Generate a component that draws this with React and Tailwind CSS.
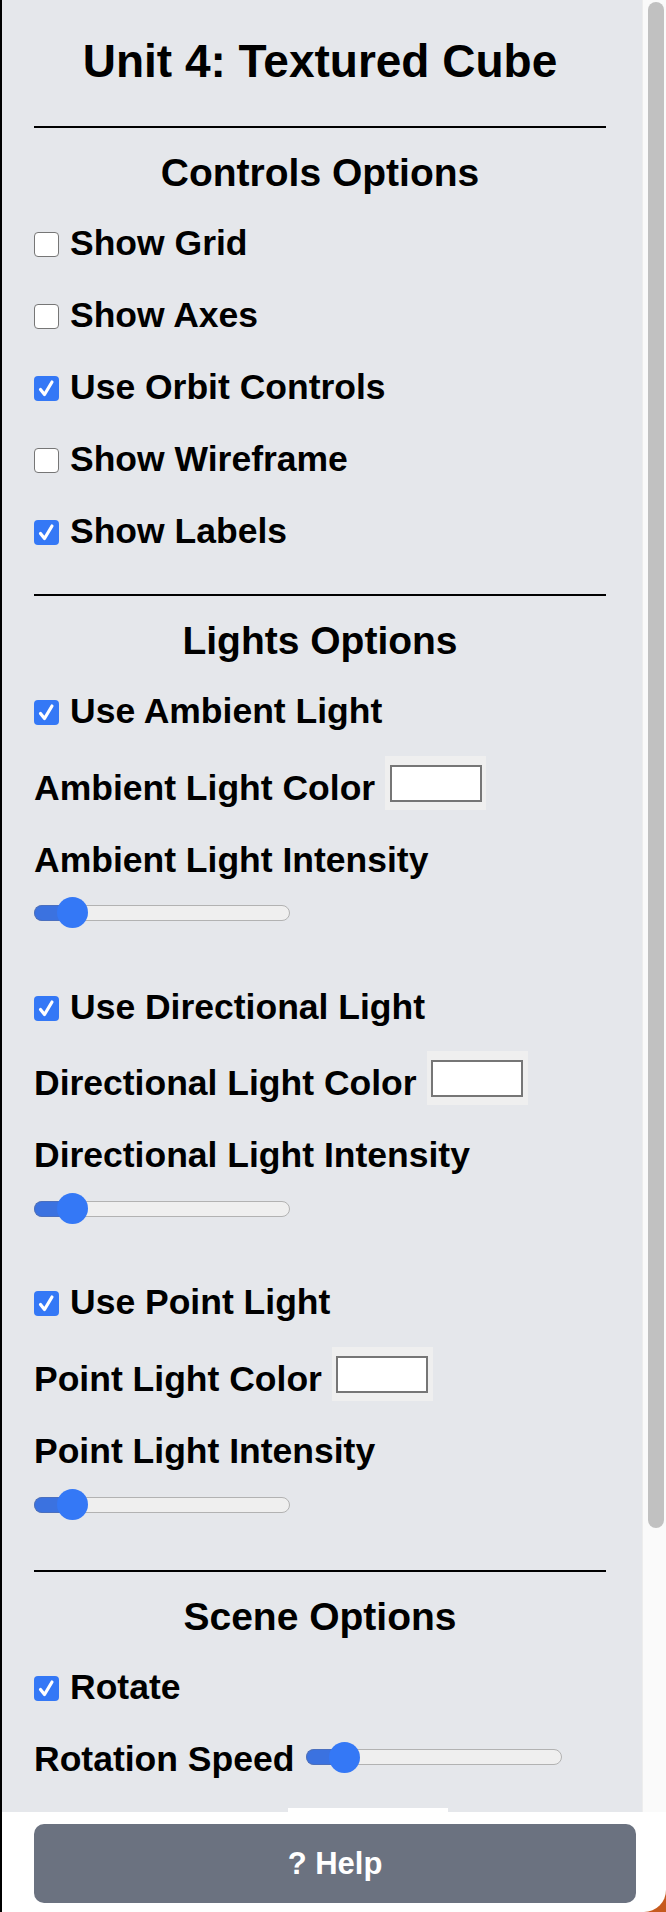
import React from "react";

const font = { fontFamily: '"Liberation Sans", Arial, sans-serif' };

const Check = ({ checked }) => (
  <div
    className={`w-[25px] h-[25px] shrink-0 rounded-[4px] flex items-center justify-center ${
      checked ? "bg-[#3478f6]" : "bg-white border-[1.5px] border-[#767676]"
    }`}
  >
    {checked && (
      <svg width="25" height="25" viewBox="0 0 25 25">
        <path
          d="M6.5 13.5 L10.5 18.5 L18 6"
          fill="none"
          stroke="white"
          strokeWidth="3.2"
          strokeLinecap="round"
          strokeLinejoin="round"
        />
      </svg>
    )}
  </div>
);

const Label = ({ children }) => (
  <span className="text-[35.5px] font-bold leading-none text-black whitespace-nowrap">
    {children}
  </span>
);

const CheckRow = ({ label, checked, className = "" }) => (
  <div className={`h-[40px] flex items-center gap-[11px] ${className}`}>
    <Check checked={checked} />
    <Label>{label}</Label>
  </div>
);

const ColorRow = ({ label, className = "" }) => (
  <div className={`h-[40px] flex items-center gap-[10px] ${className}`}>
    <Label>{label}</Label>
    <div className="w-[101px] h-[54px] shrink-0 mb-[12px] bg-[#efefef] flex items-center justify-center">
      <div className="w-[92px] h-[37px] bg-white border-2 border-[#767676]" />
    </div>
  </div>
);

const Slider = ({ className = "" }) => (
  <div className={`relative w-[256px] h-[31px] shrink-0 flex items-center ${className}`}>
    <div className="w-full h-[16px] rounded-full bg-[#efefef] border-[1.5px] border-[#b2b2b2]" />
    <div className="absolute left-0 w-[40px] h-[16px] rounded-l-full bg-[#3b72e0] border-[1.5px] border-r-0 border-[#4a6fbf]" />
    <div className="absolute left-[23px] w-[31px] h-[31px] rounded-full bg-[#3478f6]" />
  </div>
);

const Heading = ({ children, className = "" }) => (
  <div className={`h-[40px] flex items-center justify-center ${className}`}>
    <h2 className="text-[39px] font-bold leading-none text-black">{children}</h2>
  </div>
);

const Rule = ({ className = "" }) => <div className={`h-[2px] bg-black ${className}`} />;

export default function App() {
  return (
    <div className="w-[666px] h-[1912px] bg-[#c65a1e]" style={font}>
      <div className="h-full border-l-2 border-black bg-white rounded-br-[22px] overflow-hidden flex flex-col">
        <div className="flex h-[1812px] shrink-0">
          {/* Panel */}
          <div className="w-[640px] h-full bg-[#e5e7eb] overflow-hidden">
            <div className="pl-8 pr-9 flex flex-col">
              <div className="h-[56px] mt-[33px] flex items-center justify-center">
                <h1 className="text-[46px] font-bold leading-none text-black whitespace-nowrap">
                  Unit 4: Textured Cube
                </h1>
              </div>
              <Rule className="mt-[37px]" />

              <Heading className="mt-[24px]">Controls Options</Heading>
              <CheckRow className="mt-[32px]" label="Show Grid" />
              <CheckRow className="mt-[32px]" label="Show Axes" />
              <CheckRow className="mt-[32px]" label="Use Orbit Controls" checked />
              <CheckRow className="mt-[32px]" label="Show Wireframe" />
              <CheckRow className="mt-[32px]" label="Show Labels" checked />

              <Rule className="mt-[42px]" />
              <Heading className="mt-[24px]">Lights Options</Heading>
              <CheckRow className="mt-[32px]" label="Use Ambient Light" checked />
              <ColorRow className="mt-[37px]" label="Ambient Light Color" />
              <div className="h-[40px] mt-[32px] flex items-center">
                <Label>Ambient Light Intensity</Label>
              </div>
              <Slider className="mt-[16px]" />

              <CheckRow className="mt-[60px]" label="Use Directional Light" checked />
              <ColorRow className="mt-[36px]" label="Directional Light Color" />
              <div className="h-[40px] mt-[32px] flex items-center">
                <Label>Directional Light Intensity</Label>
              </div>
              <Slider className="mt-[17px]" />

              <CheckRow className="mt-[59px]" label="Use Point Light" checked />
              <ColorRow className="mt-[37px]" label="Point Light Color" />
              <div className="h-[40px] mt-[32px] flex items-center">
                <Label>Point Light Intensity</Label>
              </div>
              <Slider className="mt-[17px]" />

              <Rule className="mt-[50px]" />
              <Heading className="mt-[24px]">Scene Options</Heading>
              <CheckRow className="mt-[32px]" label="Rotate" checked />
              <div className="h-[40px] mt-[32px] flex items-center gap-[12px]">
                <Label>Rotation Speed</Label>
                <Slider className="mb-[6px]" />
              </div>
              <div className="mt-[28px] ml-[254px] w-[160px] h-[40px] bg-white" />
            </div>
          </div>

          {/* Scrollbar */}
          <div className="w-[24px] h-full bg-[#fafafa] border-l border-[#ededed] pl-[5px] pt-[2px]">
            <div className="w-[16px] h-[1526px] rounded-full bg-[#c1c1c1]" />
          </div>
        </div>

        <div className="pt-[12px] pl-8 pr-[30px]">
          <button className="w-full h-[79px] rounded-[10px] bg-[#6b7280] text-white text-[31px] font-bold leading-none flex items-center justify-center">
            ? Help
          </button>
        </div>
      </div>
    </div>
  );
}
